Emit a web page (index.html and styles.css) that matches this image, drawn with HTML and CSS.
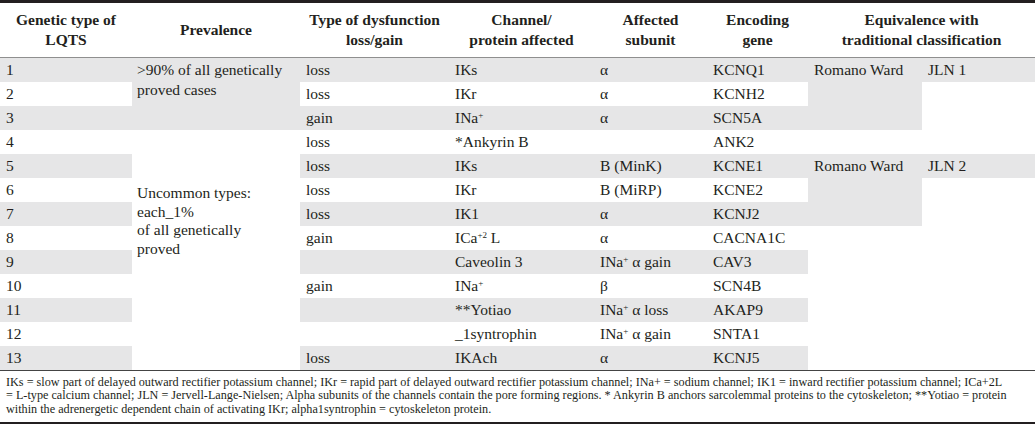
FILE: index.html
```html
<!DOCTYPE html>
<html lang="en">
<head>
<meta charset="utf-8">
<title>Genetic types of LQTS</title>
<link rel="stylesheet" href="styles.css">
</head>
<body>
<div class="wrap">
<table class="lq">
  <colgroup>
    <col class="c1"><col class="c2"><col class="c3"><col class="c4"><col class="c5"><col class="c6"><col class="c7a"><col class="c7b">
  </colgroup>
  <thead>
    <tr>
      <th>Genetic type of<br>LQTS</th>
      <th>Prevalence</th>
      <th>Type of dysfunction<br>loss/gain</th>
      <th>Channel/<br>protein affected</th>
      <th>Affected<br>subunit</th>
      <th>Encoding<br>gene</th>
      <th colspan="2">Equivalence with<br>traditional classification</th>
    </tr>
  </thead>
  <tbody>
    <tr class="g">
      <td>1</td>
      <td rowspan="3" class="sh top prev">&gt;90% of all genetically proved cases</td>
      <td>loss</td><td>IKs</td><td>α</td><td>KCNQ1</td>
      <td rowspan="3" class="sh top">Romano Ward</td>
      <td>JLN 1</td>
    </tr>
    <tr>
      <td>2</td><td>loss</td><td>IKr</td><td>α</td><td>KCNH2</td>
      <td rowspan="2"></td>
    </tr>
    <tr class="g">
      <td>3</td><td>gain</td><td>INa<sup>+</sup></td><td>α</td><td>SCN5A</td>
    </tr>
    <tr>
      <td>4</td>
      <td rowspan="10" class="unc prev">Uncommon types:<br>each_1%<br>of all genetically<br>proved</td>
      <td>loss</td><td>*Ankyrin B</td><td></td><td>ANK2</td><td></td><td></td>
    </tr>
    <tr class="g">
      <td>5</td><td>loss</td><td>IKs</td><td>B (MinK)</td><td>KCNE1</td>
      <td rowspan="3" class="sh top">Romano Ward</td>
      <td>JLN 2</td>
    </tr>
    <tr>
      <td>6</td><td>loss</td><td>IKr</td><td>B (MiRP)</td><td>KCNE2</td>
      <td rowspan="2"></td>
    </tr>
    <tr class="g">
      <td>7</td><td>loss</td><td>IK1</td><td>α</td><td>KCNJ2</td>
    </tr>
    <tr>
      <td>8</td><td>gain</td><td>ICa<sup>+2</sup> L</td><td>α</td><td>CACNA1C</td>
      <td rowspan="6" colspan="2" class="blank"></td>
    </tr>
    <tr class="g">
      <td>9</td><td></td><td>Caveolin 3</td><td>INa<sup>+</sup> α gain</td><td>CAV3</td>
    </tr>
    <tr>
      <td>10</td><td>gain</td><td>INa<sup>+</sup></td><td>β</td><td>SCN4B</td>
    </tr>
    <tr class="g">
      <td>11</td><td></td><td>**Yotiao</td><td>INa<sup>+</sup> α loss</td><td>AKAP9</td>
    </tr>
    <tr>
      <td>12</td><td></td><td>_1syntrophin</td><td>INa<sup>+</sup> α gain</td><td>SNTA1</td>
    </tr>
    <tr class="g">
      <td>13</td><td>loss</td><td>IKAch</td><td>α</td><td>KCNJ5</td>
    </tr>
  </tbody>
</table>
<p class="note">IKs = slow part of delayed outward rectifier potassium channel; IKr = rapid part of delayed outward rectifier potassium channel; INa+ = sodium channel; IK1 = inward rectifier potassium channel; ICa+2L<br>= L-type calcium channel; JLN = Jervell-Lange-Nielsen; Alpha subunits of the channels contain the pore forming regions. * Ankyrin B anchors sarcolemmal proteins to the cytoskeleton; **Yotiao = protein<br>within the adrenergetic dependent chain of activating IKr; alpha1syntrophin = cytoskeleton protein.</p>
</div>
</body>
</html>
```
FILE: styles.css
```css
html, body {
  margin: 0;
  padding: 0;
  background: #ffffff;
}
body {
  font-family: "Liberation Serif", "Times New Roman", serif;
  color: #231f20;
}
.wrap {
  width: 1035px;
  border-top: 3px solid #231f20;
  border-bottom: 2px solid #231f20;
}
.lq {
  width: 100%;
  border-collapse: collapse;
  table-layout: fixed;
  font-size: 15.5px;
  border-bottom: 1px solid #444444;
}
.c1 { width: 132px; }
.c2 { width: 168px; }
.c3 { width: 149px; }
.c4 { width: 145px; }
.c5 { width: 113px; }
.c6 { width: 101px; }
.c7a { width: 114px; }
.c7b { width: 113px; }
.lq th {
  font-weight: bold;
  font-size: 15.5px;
  text-align: center;
  vertical-align: middle;
  height: 54px;
  padding: 0 2px;
  line-height: 20px;
  border-bottom: 1px solid #8f8f8f;
  white-space: nowrap;
}
.lq td {
  height: 24px;
  padding: 0 6px;
  text-align: left;
  vertical-align: middle;
  line-height: 18px;
  white-space: nowrap;
}
.lq tr.g td { background: #e6e6e7; }
.lq td.sh { background: #e6e6e7; }
.lq td.top {
  vertical-align: top;
  padding-top: 2px;
  line-height: 20px;
  white-space: normal;
}
.lq td.prev { padding-left: 5px; }
.lq td.unc {
  background: #ffffff;
  vertical-align: top;
  padding-top: 54px;
  line-height: 18.5px;
  white-space: normal;
}
.lq td.blank { background: #ffffff; }
.lq sup {
  font-size: 9px;
  line-height: 0;
  vertical-align: 5px;
}
.note {
  margin: 0;
  padding: 5px 6px 6px;
  font-size: 12.2px;
  line-height: 13.3px;
}
```
